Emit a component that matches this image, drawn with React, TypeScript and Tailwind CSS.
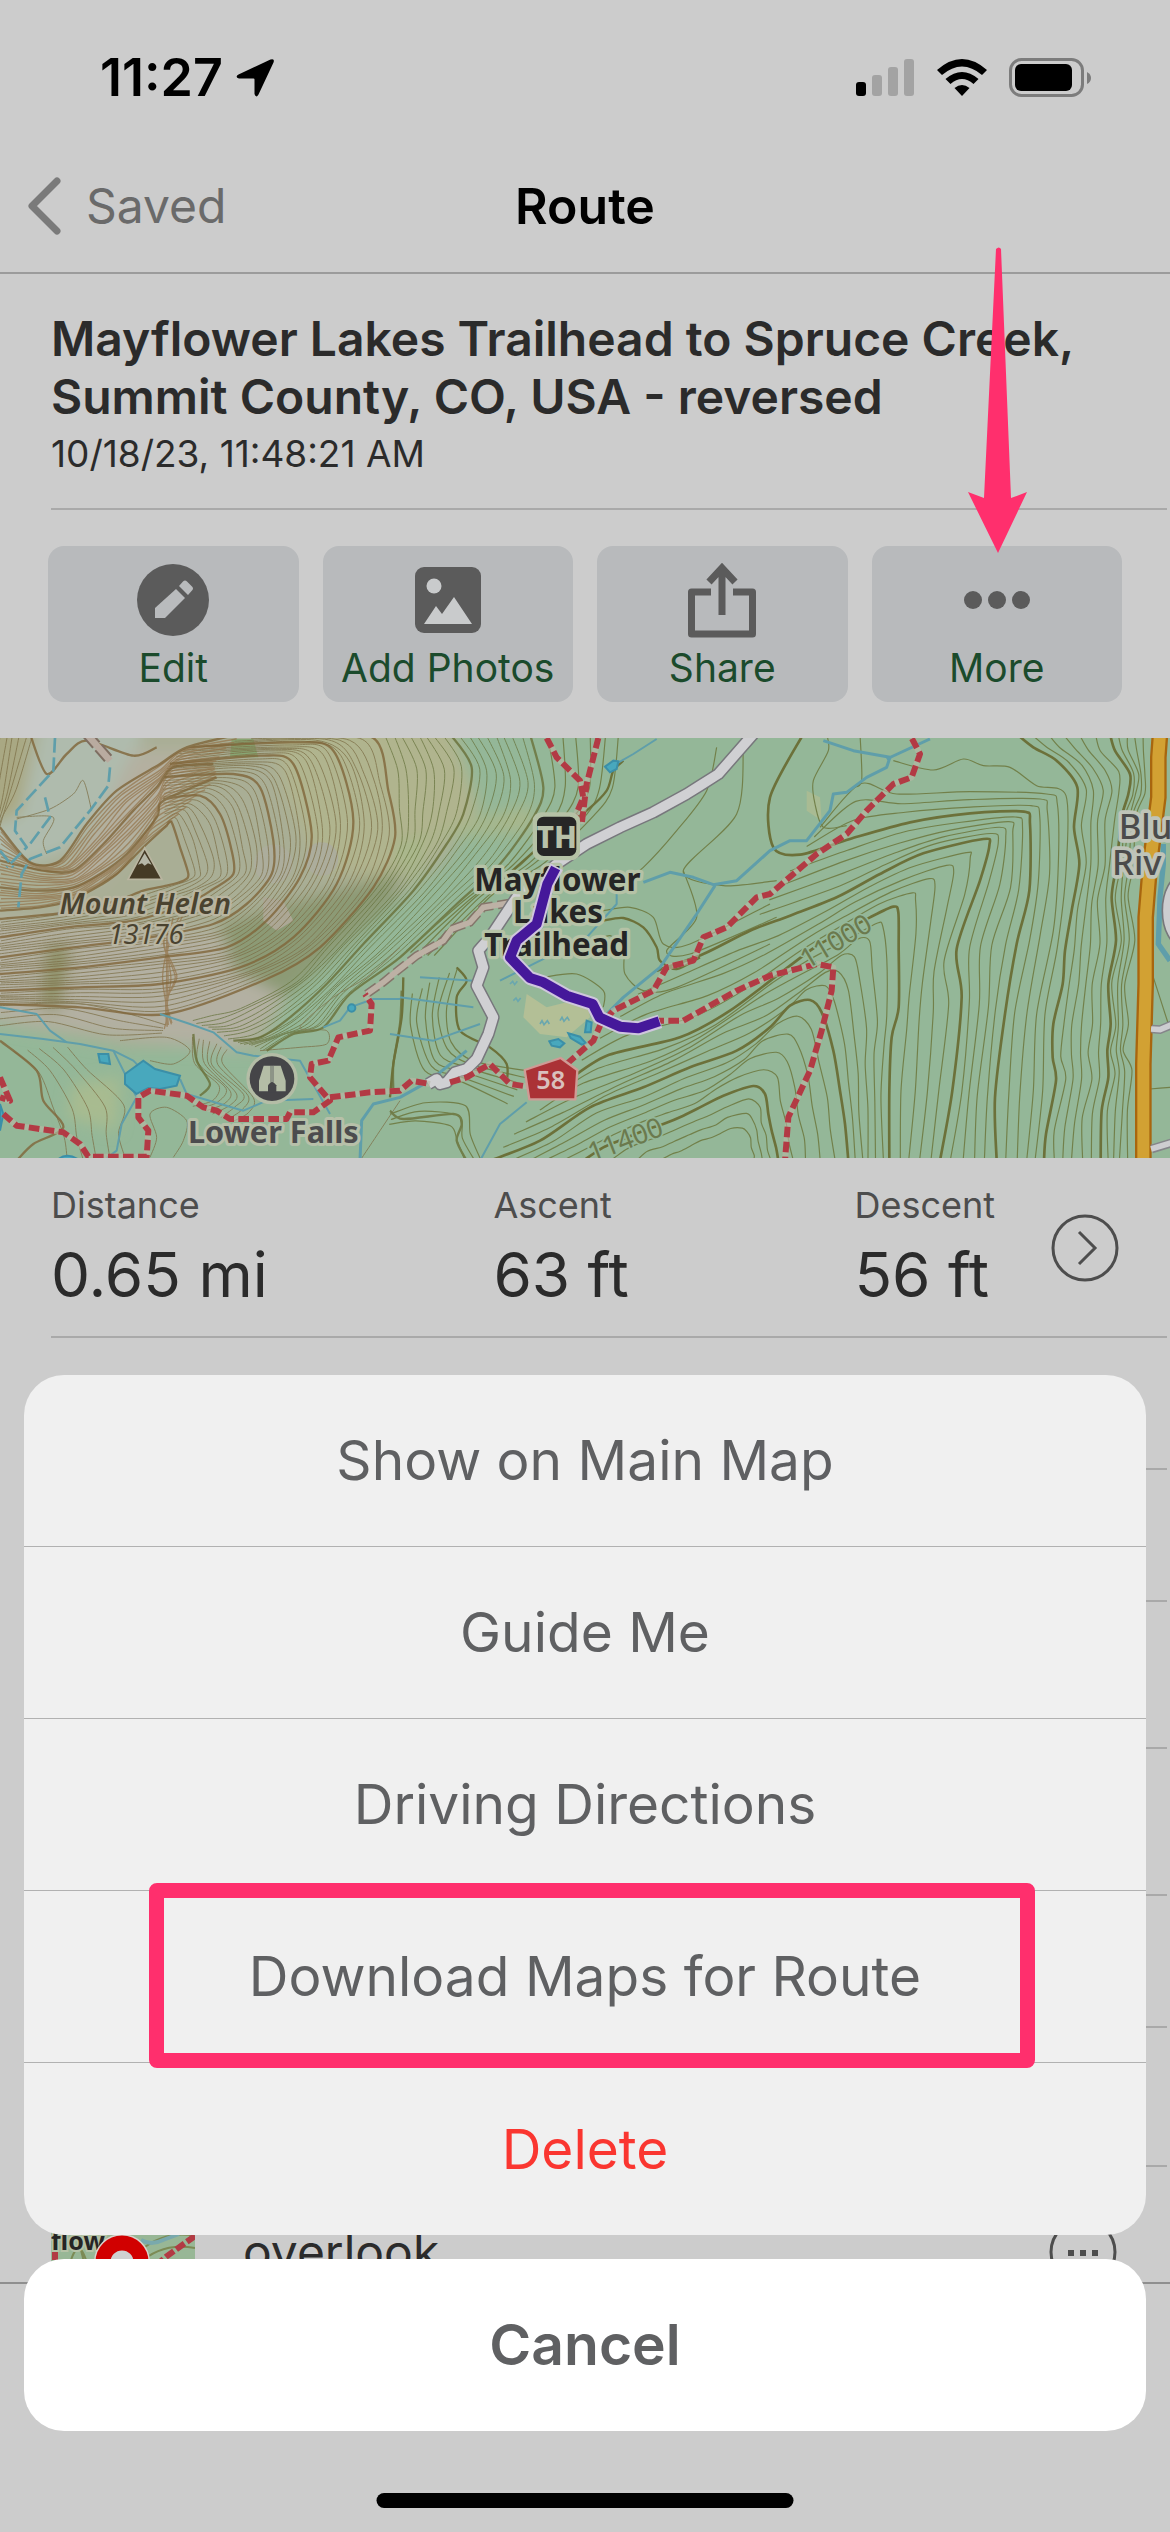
import React, { useState } from 'react';

type Point = [number, number];

const pts = (s: string): Point[] => s.split('|').map(p => p.trim().split(',').map(Number) as Point);

// Catmull-Rom spline through the points, as an SVG path
const smooth = (p: Point[]) => {
    let d = `M${p[0][0]} ${p[0][1]}`;
    for (let i = 0; i < p.length - 1; i++) {
        const a = p[i - 1] ?? p[i];
        const b = p[i];
        const c = p[i + 1];
        const e = p[i + 2] ?? c;
        const k = 7;
        d += `C${b[0] + (c[0] - a[0]) / k} ${b[1] + (c[1] - a[1]) / k} ${c[0] - (e[0] - b[0]) / k} ${c[1] - (e[1] - b[1]) / k} ${c[0]} ${c[1]}`;
    }
    return d;
};

// n intermediate contours between two index contours, with a slight wobble
const between = (a: Point[], b: Point[], n: number): string[] =>
    Array.from({ length: n }, (_, i) => {
        const t = (i + 1) / (n + 1);
        return smooth(
            a.map(([x, y], j) => [
                x + (b[j][0] - x) * t + Math.sin(i * 2 + j * 3) * 3,
                y + (b[j][1] - y) * t + Math.cos(i + j * 2) * 3,
            ] as Point)
        );
    });

// Index contours on the Mount Helen side, from the summit down
const mountain = [
    '500,285|515,275|540,350|565,430|550,450|500,465|430,480|350,510|200,545|0,565',
    '490,205|600,195|660,250|695,360|700,430|640,475|560,520|400,570|200,590|0,620',
    '490,140|700,130|780,170|820,330|815,430|740,520|640,580|450,620|220,650|0,680',
    '510,100|780,75|880,100|935,310|900,440|800,570|680,650|480,680|240,710|0,730',
    '560,50|880,35|1000,60|1060,270|1010,460|880,620|720,710|480,760|240,770|0,780',
    '900,10|1120,22|1165,180|1185,320|1120,470|960,650|800,745|500,850|240,830|0,820',
].map(pts);

const forest = [
    '1130,10|1165,120|1175,230|1185,340|1120,470|960,650|860,750|700,830|620,850|560,860',
    '1350,10|1415,110|1390,250|1340,340|1240,480|1090,640|980,760|870,860|780,920|700,930',
    '1590,10|1630,170|1600,260|1500,400|1370,520|1200,680|1050,790|970,890|880,910|800,960',
].map(pts);

const ridge = [
    '720,10|560,50|480,100|350,180|260,280|180,390|90,395|0,290',
    '640,100|520,110|470,170|400,240|310,340|220,420|130,420|0,390',
    '650,140|490,210|470,260|380,370|300,430|220,470|110,480|0,470',
    '500,285|440,340|400,380|350,430|290,470|210,510|120,530|0,540',
].map(pts);

// Index contours of the eastern hillside
const i1 = pts('1020,10|1035,60|1080,130|1075,190|1055,260|1040,400|1025,500|1038,630|1015,760|1022,880|1012,960|1015,1040|995,1140|992,1290');
const i2 = pts('740,10|790,50|860,90|922,170|912,290|928,400|905,540|885,660|878,760|850,880|848,980|858,1050|828,1210|822,1290');
const i3 = pts('-340,720|-200,670|-60,600|60,555|200,500|330,430|460,368|640,325|658,345|630,450|560,655|575,800|547,1080|510,1290');
const i4 = pts('100,10|0,200|10,350|90,372|240,325|420,275|600,248|762,243|780,280|778,480|740,640|705,850|675,1100|680,1290');
const i5 = pts('-620,1060|-490,975|-270,920|-120,840|60,705|150,640|300,560|370,528|385,545|386,650|386,830|365,920|358,1080|358,1290');
const i6 = pts('-840,1290|-690,1230|-540,1130|-380,1070|-240,1010|-100,960|0,890|60,825|120,808|155,845|190,960|210,1080|225,1180|235,1290');
const i7 = pts('-560,1290|-500,1250|-440,1225|-380,1200|-320,1180|-260,1155|-200,1125|-140,1095|-50,1066|-15,1090|-5,1150|5,1200|18,1250|25,1290');
const i8 = pts('-250,1290|-230,1280|-210,1270|-190,1260|-170,1250|-150,1240|-130,1235|-110,1230|-95,1232|-85,1240|-78,1250|-74,1265|-72,1280|-70,1290');
const i3Slope = pts('-60,600|200,500|330,430|460,368|640,325|658,345|630,450|560,655|575,800|547,1080|510,1290');
const outer = pts('150,290|270,160|380,190|600,183|830,190|862,220|865,400|850,600|800,850|790,1080|770,1290');
const verge = pts('1145,10|1140,60|1138,130|1135,190|1110,260|1100,400|1090,500|1105,630|1080,760|1085,880|1075,960|1100,1010|1095,1140|1090,1290');

const chunk = (list: Point[][], n: number) => list.slice(1).flatMap((b, i) => between(list[i], b, n));

const eastThin = [
    ...between(i4.slice(3), i3Slope, 4),
    ...between(i3, i5, 4),
    ...between(i5, i6, 5),
    ...between(i6, i7, 4),
    ...between(i7, i8, 3),
    ...between(i2, i1, 5),
    ...between(i1, verge, 4),
    ...between(i4.slice(3), outer, 2),
    smooth(outer),
    smooth(pts('370,90|490,118|580,85|640,105|720,110|800,165|888,195|888,420|862,650|825,850|818,1080|795,1290')),
    smooth(pts('270,10|275,150|250,170')),
    smooth(pts('170,10|175,60|130,150|135,220|160,290|230,285')),
    smooth(pts('1150,740|1195,880')),
    smooth(pts('1140,1075|1200,1070')),
];

const trails = [
    // west
    '10,1150|50,1185|190,1205|240,1240|265,1278|440,1278|445,1200|415,1160|415,1100|450,1080|560,1095|610,1130|650,1140|690,1165|860,1165|870,1145|940,1145|990,1110|930,1040|935,1000|985,990|1015,920|1110,900|1115,820|1095,790',
    '990,1100|1110,1085|1200,1080|1235,1050|1290,1060',
    '0,1040|30,1110|0,1100',
    // centre
    '1350,1055|1400,1040|1470,1000|1530,1060|1600,1070',
    '1640,22|1670,80|1740,150|1750,200|1720,270',
    '1795,22|1760,160|1745,280',
    '1700,1000|1780,930|1800,885|1840,840|1960,780|2000,710|2080,690|2110,620|2180,590|2270,500|2310,490|2450,370|2540,310|2600,240|2680,160|2735,140|2760,70|2735,22',
    '1960,870|2050,870|2210,780|2310,735|2450,700|2500,710|2495,780|2465,900|2430,1020|2365,1160|2355,1290',
];

const streams = [
    '0,910|130,925|240,940|340,960|400,990|420,1010',
    '540,1045|560,1090|730,1140|800,1110|940,1105',
    '0,830|110,850|150,900|200,935',
    '480,850|570,880|640,905|710,965|760,975|900,990|990,1150',
    '340,960|370,1020|410,1100|365,1180|350,1260|320,1282',
    '970,890|1020,870|1050,830|1120,805|1200,805',
    '1080,1290|1085,1170|1120,1120|1200,1100|1290,1050|1400,960',
    '1930,455|2010,425|2080,440|2140,462|2210,450|2260,405|2310,360|2370,330|2420,330|2490,240|2500,190|2540,185|2600,140|2660,110|2670,80|2560,60|2470,30',
    '2660,85|2790,25',
    '2145,465|2090,550|1980,710|1870,800|1820,850',
    '1850,490|1850,520|1760,620|1500,750',
    '1440,1290|1500,1180|1580,1115',
    '1170,910|1300,930|1440,880',
    '1260,740|1420,750',
    '1200,800|1420,830',
    '1830,110|1900,70|1970,25',
];

const polyline = (s: string) => 'M' + s.replace(/\|/g, 'L');

const TrailMap = () => (
    <svg viewBox="0 22 3510 1260" className="block w-full" role="img" aria-label="Route map">
        <defs>
            <filter id="soften" x="-10%" y="-10%" width="120%" height="120%">
                <feGaussianBlur stdDeviation="22" />
            </filter>
        </defs>
        <rect y="22" width="3510" height="1260" fill="#94b798" />

        {/* land cover */}
        <g filter="url(#soften)">
            <path d="M-60 -40H1330L1420 260 1330 400 1080 600 860 800 780 960 560 950 380 950 -60 870Z" fill="#a9ae95" />
            <path d="M800 -40H1350L1440 240 1250 420 1120 440 960 420 860 200Z" fill="#b0b48e" />
            <path d="M-60 -40H420L420 100 200 360 80 400 -60 380Z" fill="#afbbad" />
            <path d="M-60 -40H120L60 250 -60 300Z" fill="#a9a883" />
            <path d="M400 60 620 60 480 260 300 460 180 460 280 300Z" fill="#b4b0a0" />
            <path d="M-60 560 640 600 860 800 700 960 -60 860Z" fill="#b3b0a2" />
            <path d="M140 640H215L180 840 120 830Z" fill="#8f9268" />
            <path d="M660 580 1200 420 1180 520 860 800 700 720Z" fill="#8c9a74" />
            <path d="M220 1060 360 1040 350 1200 200 1160Z" fill="#a8bb90" />
            <path d="M1170 340 1600 220 1600 300 1280 320 1250 480Z" fill="#a9b78c" />
        </g>
        <circle cx="820" cy="400" r="58" fill="#acad9c" />
        <circle cx="965" cy="385" r="50" fill="#acad9c" />
        <path d="M790 500 850 510 880 570 830 600 790 570Z" fill="#aca795" />
        <path d="M695 25H760L775 80H690Z" fill="#88a673" />
        <path d="M1580 790 1640 830 1760 800 1770 860 1700 920 1620 910 1570 860Z" fill="#b3bf96" />
        <path d="M2420 180 2460 200 2465 270 2420 240Z" fill="#a9bb93" />

        {/* contours */}
        <g fill="none" stroke="#7d7048" strokeWidth="3" opacity=".75">
            {chunk(mountain, 6).map((d, i) => <path key={i} d={d} />)}
            {chunk(forest, 8).map((d, i) => <path key={i} d={d} stroke="#68743f" />)}
            {between(pts('-20,10|-30,200|-20,300|0,400'), pts('120,10|60,170|10,260|-10,300'), 6).map((d, i) => <path key={i} d={d} />)}
            {between(pts('0,800|240,800|400,830|500,870'), pts('0,910|120,890|300,930|480,920'), 4).map((d, i) => <path key={i} d={d} />)}
            {between(pts('0,960|80,1030|110,1140|150,1220|160,1290'), pts('240,950|300,1010|420,1120|400,1210|420,1290'), 5).map((d, i) => <path key={i} d={d} />)}
            {between(pts('560,910|570,1000|640,1060|620,1100|560,1120'), pts('700,960|680,1000|780,1110|760,1150|720,1180'), 7).map((d, i) => <path key={i} d={d} />)}
            <path d={smooth(pts('450,1280|470,1220|450,1150|500,1130|560,1170|550,1230|520,1280'))} />
            <path d={smooth(pts('360,930|500,920|570,960|520,1000|450,990'))} />
            <path d={smooth(pts('780,960|900,950|980,940|980,900|900,890|1000,800|1100,740|1200,650'))} />
            <path d={smooth(pts('50,265|150,235|220,190|250,150|275,240'))} />
            <path d={smooth(pts('50,260|160,260|130,330|140,370'))} />
            <path d={smooth(pts('1080,1290|1140,1200|1200,1110'))} />
        </g>
        <g fill="none" stroke="#94754c" strokeWidth="4" opacity=".7">
            {chunk(ridge, 7).map((d, i) => <path key={i} d={d} />)}
            {between(pts('560,550|510,640|480,740|500,850|490,900'), pts('470,580|490,650|540,740|500,800|520,870'), 6).map((d, i) => <path key={i} d={d} />)}
        </g>
        <g fill="none" stroke="#80663a" strokeWidth="7" opacity=".8">
            {mountain.map((p, i) => <path key={i} d={smooth(p)} />)}
            {ridge.map((p, i) => <path key={i} d={smooth(p)} />)}
            {forest.slice(1).map((p, i) => <path key={i} d={smooth(p)} stroke="#697039" />)}
            <path d={smooth(pts('90,10|140,130|200,70|260,30|400,75|470,50'))} />
            <path d={smooth(pts('0,930|110,1020|130,1110|190,1190|100,1240|50,1290'))} />
            <path d={smooth(pts('580,910|590,990|630,1060|600,1095'))} stroke="#697039" />
            <path d={smooth(pts('1205,780|1200,880|1180,1000|1180,1080'))} stroke="#697039" />
            <path d={smooth(pts('1170,1140|1210,1165|1360,1150|1385,1180|1370,1230|1400,1290'))} stroke="#697039" />
        </g>

        <g fill="none" stroke="#72804a" strokeWidth="3.5" transform="translate(1170 0)">
            {between(pts('430,10|460,170|430,260|330,400|200,520|30,660'), pts('730,10|700,170|640,260|480,400|330,480|150,680'), 6).map((d, i) => <path key={i} d={d} />)}
            <path d={smooth(pts('640,540|720,530|790,560|820,640|900,640|1140,520'))} />
            <path d={smooth(pts('600,640|660,615|700,660|705,730|760,780|860,770|1140,640'))} />
            <path d={smooth(pts('460,740|560,730|640,780|640,830'))} />
            <path d={smooth(pts('880,420|920,560|830,660|900,670|1160,560'))} />
            <path d={smooth(pts('980,50|950,180|860,300|760,410|700,450'))} />
            <path d={smooth(pts('1060,40|1040,250|880,420|1000,465|1160,450'))} />
            {between(pts('40,800|40,900|90,1040|200,1060|340,1140'), pts('230,700|190,820|200,920|260,980|440,1000'), 6).map((d, i) => <path key={i} d={d} />)}
            {between(pts('0,1130|120,1090|250,1100|260,1200|300,1290'), pts('0,1200|60,1200|160,1210|180,1240|200,1290'), 3).map((d, i) => <path key={i} d={d} />)}
        </g>
        <g fill="none" stroke="#6c713a" strokeWidth="7" transform="translate(1170 0)">
            <path d={smooth(pts('640,570|700,562|760,590|800,650|810,690|860,715|930,680'))} />
            <path d={smooth(pts('700,90|670,120|650,180|590,240|470,330|300,480'))} />
            <path d={smooth(pts('200,710|230,750|200,800|210,900|300,950|350,1000|350,1060'))} />
            <path d={smooth(pts('40,740|35,860|10,1000|0,1100'))} />
        </g>
        <g transform="translate(2310 0)">
            <g fill="none" stroke="#72804a" strokeWidth="3.5">
                {eastThin.map((d, i) => <path key={i} d={d} />)}
            </g>
            <g fill="none" stroke="#6c713a" strokeWidth="8">
                {[i1, i2, i3, i4, i5, i6, i7].map((p, i) => <path key={i} d={smooth(p)} />)}
            </g>
        </g>

        {/* water */}
        <g fill="none" stroke="#5f9eaa" strokeWidth="8" strokeLinejoin="round">
            {streams.map((s, i) => <path key={i} d={polyline(s)} strokeWidth={i > 5 && i < 10 ? 9 : 6} />)}
            <path d="M165 22 160 120 50 240 45 300 80 350 20 410M330 110 325 165 270 240 180 350 90 385 65 430 55 530M135 200 150 260 90 340M0 360 40 410" strokeDasharray="44 14" />
            <path d="M3490 340V400L3480 500 3475 640 3510 690" strokeWidth="16" />
        </g>
        <g fill="#48a8bd" stroke="#3b8fa8" strokeWidth="6">
            <path d="M375 1030 430 990 465 1015 540 1035 530 1065 480 1075 445 1072 410 1090 375 1060Z" />
            <path d="M295 970 325 970 330 1000 300 995Z" />
            <circle cx="1055" cy="832" r="11" />
            <path d="M1815 108 1840 90 1855 92 1850 115 1830 125Z" />
            <path d="M1760 870 1775 875 1772 905 1755 905Z" />
            <path d="M1705 908 1740 918 1758 938 1745 942 1712 922Z" />
            <path d="M1648 932 1675 925 1693 938 1680 950 1655 945Z" />
            <path d="M0 1120 10 1150 0 1200Z" />
            <path d="M170 1290Q200 1260 240 1290Z" />
        </g>
        <path d="M1620 880l6-10 6 12 10-12 6 10M1680 870l6-10 6 12 10-12 6 10M1530 760l8-8 6 10 8-10M1540 810l8-8 6 10 8-10" fill="none" stroke="#6aa7ae" strokeWidth="5" />

        {/* roads */}
        <path d="M3480 10 3475 80 3475 200 3450 400 3437 560 3437 760 3430 1000 3430 1290" fill="none" stroke="#a8660f" strokeWidth="50" />
        <path d="M3480 10 3475 80 3475 200 3450 400 3437 560 3437 760 3430 1000 3430 1290" fill="none" stroke="#d2a133" strokeWidth="36" />
        <ellipse cx="3545" cy="540" rx="58" ry="105" fill="#cdcdd0" stroke="#77777c" strokeWidth="5" />
        <path d="M3455 895 3480 897 3520 880M3455 1255 3520 1235" fill="none" stroke="#85858a" strokeWidth="26" />
        <path d="M3453 895 3480 897 3520 880M3453 1255 3520 1235" fill="none" stroke="#cdcdd0" strokeWidth="17" />
        <path d="M260 10 330 90" fill="none" stroke="#7e6e62" strokeWidth="32" strokeDasharray="44 10" />
        <path d="M260 10 330 90" fill="none" stroke="#b9aba0" strokeWidth="20" />
        <path d="M1100 790 1150 755 1180 730 1250 675 1330 630 1355 595 1410 575 1450 530 1540 515" fill="none" stroke="#84756a" strokeWidth="26" strokeDasharray="40 14" />
        <path d="M1100 790 1150 755 1180 730 1250 675 1330 630 1355 595 1410 575 1450 530 1540 515" fill="none" stroke="#bdb1a5" strokeWidth="17" />
        <g fill="none" strokeLinejoin="round">
            <path d="M2260 10 2155 130 2100 165 2060 190 1960 245 1860 290 1760 340 1670 400 1550 500 1470 620 1435 660 1450 710 1430 765 1480 860 1465 910 1430 985 1400 1015 1365 1025 1340 1055 1320 1060 1310 1045 1285 1060" stroke="#77777c" strokeWidth="38" />
            <path d="M2260 10 2155 130 2100 165 2060 190 1960 245 1860 290 1760 340 1670 400 1550 500 1470 620 1435 660 1450 710 1430 765 1480 860 1465 910 1430 985 1400 1015 1365 1025 1340 1055 1320 1060 1310 1045 1285 1060" stroke="#d0d0d3" strokeWidth="29" />
        </g>

        {/* trails */}
        <g fill="none" strokeLinejoin="round">
            {trails.map((t, i) => <path key={i} d={polyline(t)} stroke="#b9b8a3" strokeWidth="18" opacity=".6" />)}
            {trails.map((t, i) => <path key={i} d={polyline(t)} stroke="#b23a44" strokeWidth="18" strokeDasharray="32 13" />)}
        </g>

        {/* labels */}
        <g fontFamily="'Noto Sans', 'Open Sans', sans-serif" textAnchor="middle" paintOrder="stroke" strokeLinejoin="round">
            <g fontStyle="italic" fill="#4a4330" stroke="#b9b5a0" strokeWidth="14">
                <text x="436" y="550" fontSize="87" fontWeight="600">Mount Helen</text>
                <text x="438" y="640" fontSize="82">13176</text>
            </g>
            <g fontWeight="700" fontSize="94" fill="#252525" stroke="#b5c2a6" strokeWidth="20">
                <text x="1672" y="482">Mayflower</text>
                <text x="1674" y="578">Lakes</text>
                <text x="1670" y="676">Trailhead</text>
            </g>
            <text x="820" y="1238" fontSize="92" fontWeight="700" fill="#4c4c4e" stroke="#b7c0a9" strokeWidth="18">Lower Falls</text>
            <g fontSize="104" fontWeight="500" fill="#4b4b4b" stroke="#bfc4b8" strokeWidth="22" textAnchor="start">
                <text x="3356" y="325">Blu</text>
                <text x="3336" y="432">Riv</text>
            </g>
            <g fontSize="82" fill="#6b7a4e" stroke="#94b798" strokeWidth="10">
                <text transform="translate(2522 656) rotate(-31)">11000</text>
                <text transform="translate(1886 1254) rotate(-21)">11400</text>
            </g>
        </g>

        {/* peak */}
        <path d="M434 352 486 446H384Z" fill="#453a25" stroke="#b9b5a0" strokeWidth="5" />
        <path d="M434 368 414 402 426 398 434 405 444 398 455 402Z" fill="#b6b7a8" />

        {/* viewpoint */}
        <circle cx="816" cy="1044" r="77" fill="#b4bda6" />
        <circle cx="816" cy="1044" r="67" fill="#454548" />
        <path d="M791 1005H812V1082H777V1050ZM820 1005H842L857 1050V1082H820Z" fill="#b4bda6" />
        <path d="M812 1005H821V1055H812Z" fill="#8d9487" />
        <path d="M804 1085V1064Q816 1046 829 1064V1085Z" fill="#454548" />

        {/* trailhead */}
        <rect x="1598" y="245" width="142" height="144" rx="26" fill="#b5c2a6" />
        <rect x="1611" y="258" width="118" height="118" rx="20" fill="#262626" />
        <text x="1670" y="351" textAnchor="middle" fontFamily="'Noto Sans', sans-serif" fontWeight="800" fontSize="90" fill="#b8c1a9">TH</text>

        {/* road shield */}
        <path d="M1682 982 1732 1018 1726 1106H1588L1574 1018Z" fill="#ab3236" stroke="#cf9b95" strokeWidth="7" strokeLinejoin="round" />
        <text x="1652" y="1076" textAnchor="middle" fontFamily="'Noto Sans', sans-serif" fontWeight="600" fontSize="76" fill="#d9c0bd">58</text>

        {/* route */}
        <g fill="none" strokeLinejoin="round">
            <path d="M1670 408 1642 460 1610 580 1550 630 1530 680 1590 742 1630 755 1700 795 1778 820 1798 860 1860 888 1915 893 1980 872" stroke="#cfc6dd" strokeWidth="42" />
            <path d="M1667 412 1642 460 1610 580 1550 630 1530 680 1590 742 1630 755 1700 795 1778 820 1798 860 1860 888 1915 893 1978 872" stroke="#45189a" strokeWidth="30" />
        </g>
    </svg>
);

const StatusBar = () => (
    <div className="flex h-[156px] items-center justify-between pl-[100px] pr-[78px]">
        <div className="flex items-center gap-3">
            <span className="text-[52px] leading-none font-semibold text-black">11:27</span>
            <svg className="h-10 w-10" viewBox="0 0 40 40" aria-hidden="true">
                <path d="M35.500 1.500Q40 0 38.500 4.500L23.500 36.500Q21 40.500 19.500 36V21.500Q19.500 20.500 18.500 20.500H4Q-.500 19 3.500 16.500Z" fill="#000" />
            </svg>
        </div>
        <div className="flex items-center">
            <svg className="mr-[23px] h-10 w-[58px]" viewBox="0 0 58 40" aria-hidden="true">
                <rect x="0" y="24" width="10" height="14" rx="3" fill="#000" />
                <rect x="16" y="17" width="10" height="21" rx="3" fill="#a3a3a3" />
                <rect x="32" y="9" width="10" height="29" rx="3" fill="#a3a3a3" />
                <rect x="48" y="1" width="10" height="37" rx="3" fill="#a3a3a3" />
            </svg>
            <svg className="mr-[22px] h-10 w-[50px]" viewBox="0 0 50 40" aria-hidden="true">
                <path d="M0 12Q25 -10 50 12L45 17Q25 0 5 17Z" />
                <path d="M8.500 21Q25 7 41.500 21L36.500 26Q25 16 13.500 26Z" />
                <path d="M17.500 30Q25 24 32.500 30L25 38Z" />
            </svg>
            <svg className="h-10 w-[83px]" viewBox="0 0 83 40" aria-hidden="true">
                <rect x="1.500" y="1.500" width="72" height="36" rx="11" fill="none" stroke="#7c7c7c" strokeWidth="3" />
                <rect x="6" y="6" width="57" height="27" rx="6" fill="#000" />
                <path d="M78 14Q82 16 82 20T78 26Z" fill="#7c7c7c" />
            </svg>
        </div>
    </div>
);

const EditIcon = () => (
    <svg className="h-[76px] w-[76px]" viewBox="0 0 76 76" aria-hidden="true">
        <circle cx="38" cy="38" r="36" fill="#5b5b5b" />
        <path d="M20 56V46L41 27 50 36 30 56Z" fill="#b9bbbd" />
        <path d="M44 24 48 19.500Q50 17.500 52 19.500L57 24.500Q59 26.500 57 28.500L53 33Z" fill="#b9bbbd" />
    </svg>
);

const PhotoIcon = () => (
    <svg className="h-[76px] w-[76px]" viewBox="0 0 76 76" aria-hidden="true">
        <rect x="5" y="5" width="66" height="66" rx="9" fill="#5b5b5b" />
        <circle cx="24" cy="24" r="7.500" fill="#c9cbcc" />
        <path d="M14 62 26 44 32 52 44 35 62 62Z" fill="#c9cbcc" />
    </svg>
);

const ShareIcon = () => (
    <svg className="h-[76px] w-[76px]" viewBox="0 0 76 76" fill="none" stroke="#5b5b5b" strokeWidth="7" aria-hidden="true">
        <path d="M27 30H7.500V72H68.500V30H49" strokeLinejoin="round" />
        <path d="M38 53V8M25 20 38 6 51 20" />
    </svg>
);

const MoreIcon = () => (
    <svg className="h-[76px] w-[76px]" viewBox="0 0 76 76" fill="#5b5b5b" aria-hidden="true">
        <circle cx="14" cy="38" r="9" />
        <circle cx="38" cy="38" r="9" />
        <circle cx="62" cy="38" r="9" />
    </svg>
);

const actions = [
    { label: 'Edit', Icon: EditIcon },
    { label: 'Add Photos', Icon: PhotoIcon },
    { label: 'Share', Icon: ShareIcon },
    { label: 'More', Icon: MoreIcon },
];

const stats = [
    { label: 'Distance', value: '0.65 mi' },
    { label: 'Ascent', value: '63 ft' },
    { label: 'Descent', value: '56 ft' },
];

const sheetItems = ['Show on Main Map', 'Guide Me', 'Driving Directions', 'Download Maps for Route', 'Delete'];

const WaypointThumb = () => (
    <svg className="h-36 w-36" viewBox="0 0 144 144" aria-hidden="true">
        <rect width="144" height="144" fill="#98b796" />
        <path d="M90 70Q115 50 144 56M88 84Q110 62 144 68M96 92Q120 76 144 82M20 80Q30 50 40 100M30 70 40 110" fill="none" stroke="#7c8a54" strokeWidth="2" />
        <path d="M90 60Q100 66 112 60L128 54" fill="none" stroke="#79a9ad" strokeWidth="4" />
        <path d="M144 56 116 76 100 90M4 70V90" fill="none" stroke="#b23a44" strokeWidth="6" strokeDasharray="10 3" />
        <text x="0" y="70" fontFamily="'Noto Sans', sans-serif" fontWeight="700" fontSize="25" fill="#252525" stroke="#b5c2a6" strokeWidth="4" paintOrder="stroke">flow</text>
        <circle cx="71" cy="82" r="22" fill="none" stroke="#d9d2cc" strokeWidth="12" />
        <circle cx="71" cy="82" r="19" fill="#cfd0d0" stroke="#d10000" strokeWidth="15" />
    </svg>
);

const App: React.FC = () => {
    const [sheetOpen, setSheetOpen] = useState(true);

    return (
        <div className="relative flex h-screen flex-col overflow-hidden bg-[#cccccc] font-[Inter,'Liberation_Sans',sans-serif] text-[#2b2b2b]">
            <StatusBar />
            <header className="grid h-[118px] shrink-0 grid-cols-3 items-center border-b-2 border-[#9b9b9b] pb-4">
                <a href="#saved" className="flex items-center gap-6 pl-[26px] text-[48px] leading-none text-[#6a6a6a]">
                    <svg className="h-[60px] w-9" viewBox="0 0 36 60" fill="none" stroke="#7a7a7a" strokeWidth="7" strokeLinecap="round" strokeLinejoin="round" aria-hidden="true">
                        <path d="M31 5 6 30 31 55" />
                    </svg>
                    Saved
                </a>
                <h1 className="text-center text-[50px] leading-none font-semibold text-black">Route</h1>
            </header>

            <main className="min-h-0 flex-1 overflow-hidden">
                <section className="mr-[3px] ml-[51px] border-b-2 border-[#a9a9a9] pt-9 pb-[26px]">
                    <h2 className="text-[48px] leading-[58px] font-semibold">
                        Mayflower Lakes Trailhead to Spruce Creek,<br />
                        Summit County, CO, USA - reversed
                    </h2>
                    <p className="text-[37px] leading-[56px]">10/18/23, 11:48:21 AM</p>
                </section>

                <div className="grid grid-cols-4 gap-6 px-12 py-9">
                    {actions.map(({ label, Icon }) => (
                        <button
                            key={label}
                            onClick={() => label === 'More' && setSheetOpen(true)}
                            className="flex h-[156px] flex-col items-center rounded-2xl bg-[#b8babc] pt-4 text-[39px] leading-[60px] whitespace-nowrap text-[#1b4b2c]"
                        >
                            <Icon />
                            {label}
                        </button>
                    ))}
                </div>

                <TrailMap />

                <section className="mr-[3px] ml-[51px] flex items-center border-b-2 border-[#a9a9a9] pt-6 pr-12 pb-[22px]">
                    <dl className="flex flex-1 justify-between">
                        {stats.map(s => (
                            <div key={s.label}>
                                <dt className="text-[36px] leading-[46px] text-[#4d4d4d]">{s.label}</dt>
                                <dd className="mt-2 text-[62px] leading-[78px]">{s.value}</dd>
                            </div>
                        ))}
                    </dl>
                    <button aria-label="Show statistics" className="ml-14">
                        <svg className="h-[68px] w-[68px]" viewBox="0 0 68 68" fill="none" stroke="#4d4d4d" strokeWidth="3" aria-hidden="true">
                            <circle cx="34" cy="34" r="32" />
                            <path d="M28 18 44 34 28 50" />
                        </svg>
                    </button>
                </section>

                <div className="mr-[3px] ml-[51px]">
                    {['h-[132px]', 'h-[132px]', 'h-[147px]', 'h-[147px]', 'h-[132px]', 'h-[139px]'].map((h, i) => (
                        <div key={i} className={`${h} border-b-2 border-[#a9a9a9]`}></div>
                    ))}
                    <div className="flex h-[170px] items-center pr-[50px]">
                        <WaypointThumb />
                        <span className="ml-12 flex-1 text-[48px] leading-[58px]">overlook</span>
                        <button aria-label="Waypoint options">
                            <svg className="h-[68px] w-[68px]" viewBox="0 0 68 68" aria-hidden="true">
                                <circle cx="34" cy="34" r="32" fill="none" stroke="#4d4d4d" strokeWidth="3" />
                                <path d="M19 32H25V38H19ZM31 32H37V38H31ZM43 32H49V38H43Z" fill="#4d4d4d" />
                            </svg>
                        </button>
                    </div>
                </div>
            </main>
            <footer className="h-[250px] shrink-0 border-t-2 border-[#8f8f8f]"></footer>

            {sheetOpen && (
                <div className="absolute inset-0 flex flex-col justify-end gap-6 px-6 pb-[101px] text-[#5f6062]">
                    <div className="divide-y divide-[#b1b1b1] overflow-hidden rounded-[40px] bg-[#f0f0f0] text-[55px]">
                        {sheetItems.map(item => (
                            <button
                                key={item}
                                className={`relative block h-[172px] w-full ${item === 'Delete' ? 'text-[#fa3630]' : ''} ${item.startsWith('Download') ? 'z-10' : ''}`}
                            >
                                {item}
                                {item.startsWith('Download') && (
                                    <span className="absolute -top-2 right-[111px] -bottom-1.5 left-[125px] rounded-lg border-[15px] border-[#ff2f6d]"></span>
                                )}
                            </button>
                        ))}
                    </div>
                    <button onClick={() => setSheetOpen(false)} className="h-[172px] rounded-[40px] bg-white text-[57px] font-semibold">
                        Cancel
                    </button>
                </div>
            )}

            {/* arrow pointing at the More button */}
            <svg className="pointer-events-none absolute top-[247px] right-[142px] h-[308px] w-[62px]" viewBox="0 0 62 308" aria-hidden="true">
                <path d="M30 2Q33 -1 35 2L45 251 61 245 32 306 2 245 18 251Z" fill="#ff2f6d" />
            </svg>
            <div className="absolute bottom-6 left-1/2 h-[15px] w-[417px] -translate-x-1/2 rounded-full bg-black"></div>
        </div>
    );
};

export default App;
